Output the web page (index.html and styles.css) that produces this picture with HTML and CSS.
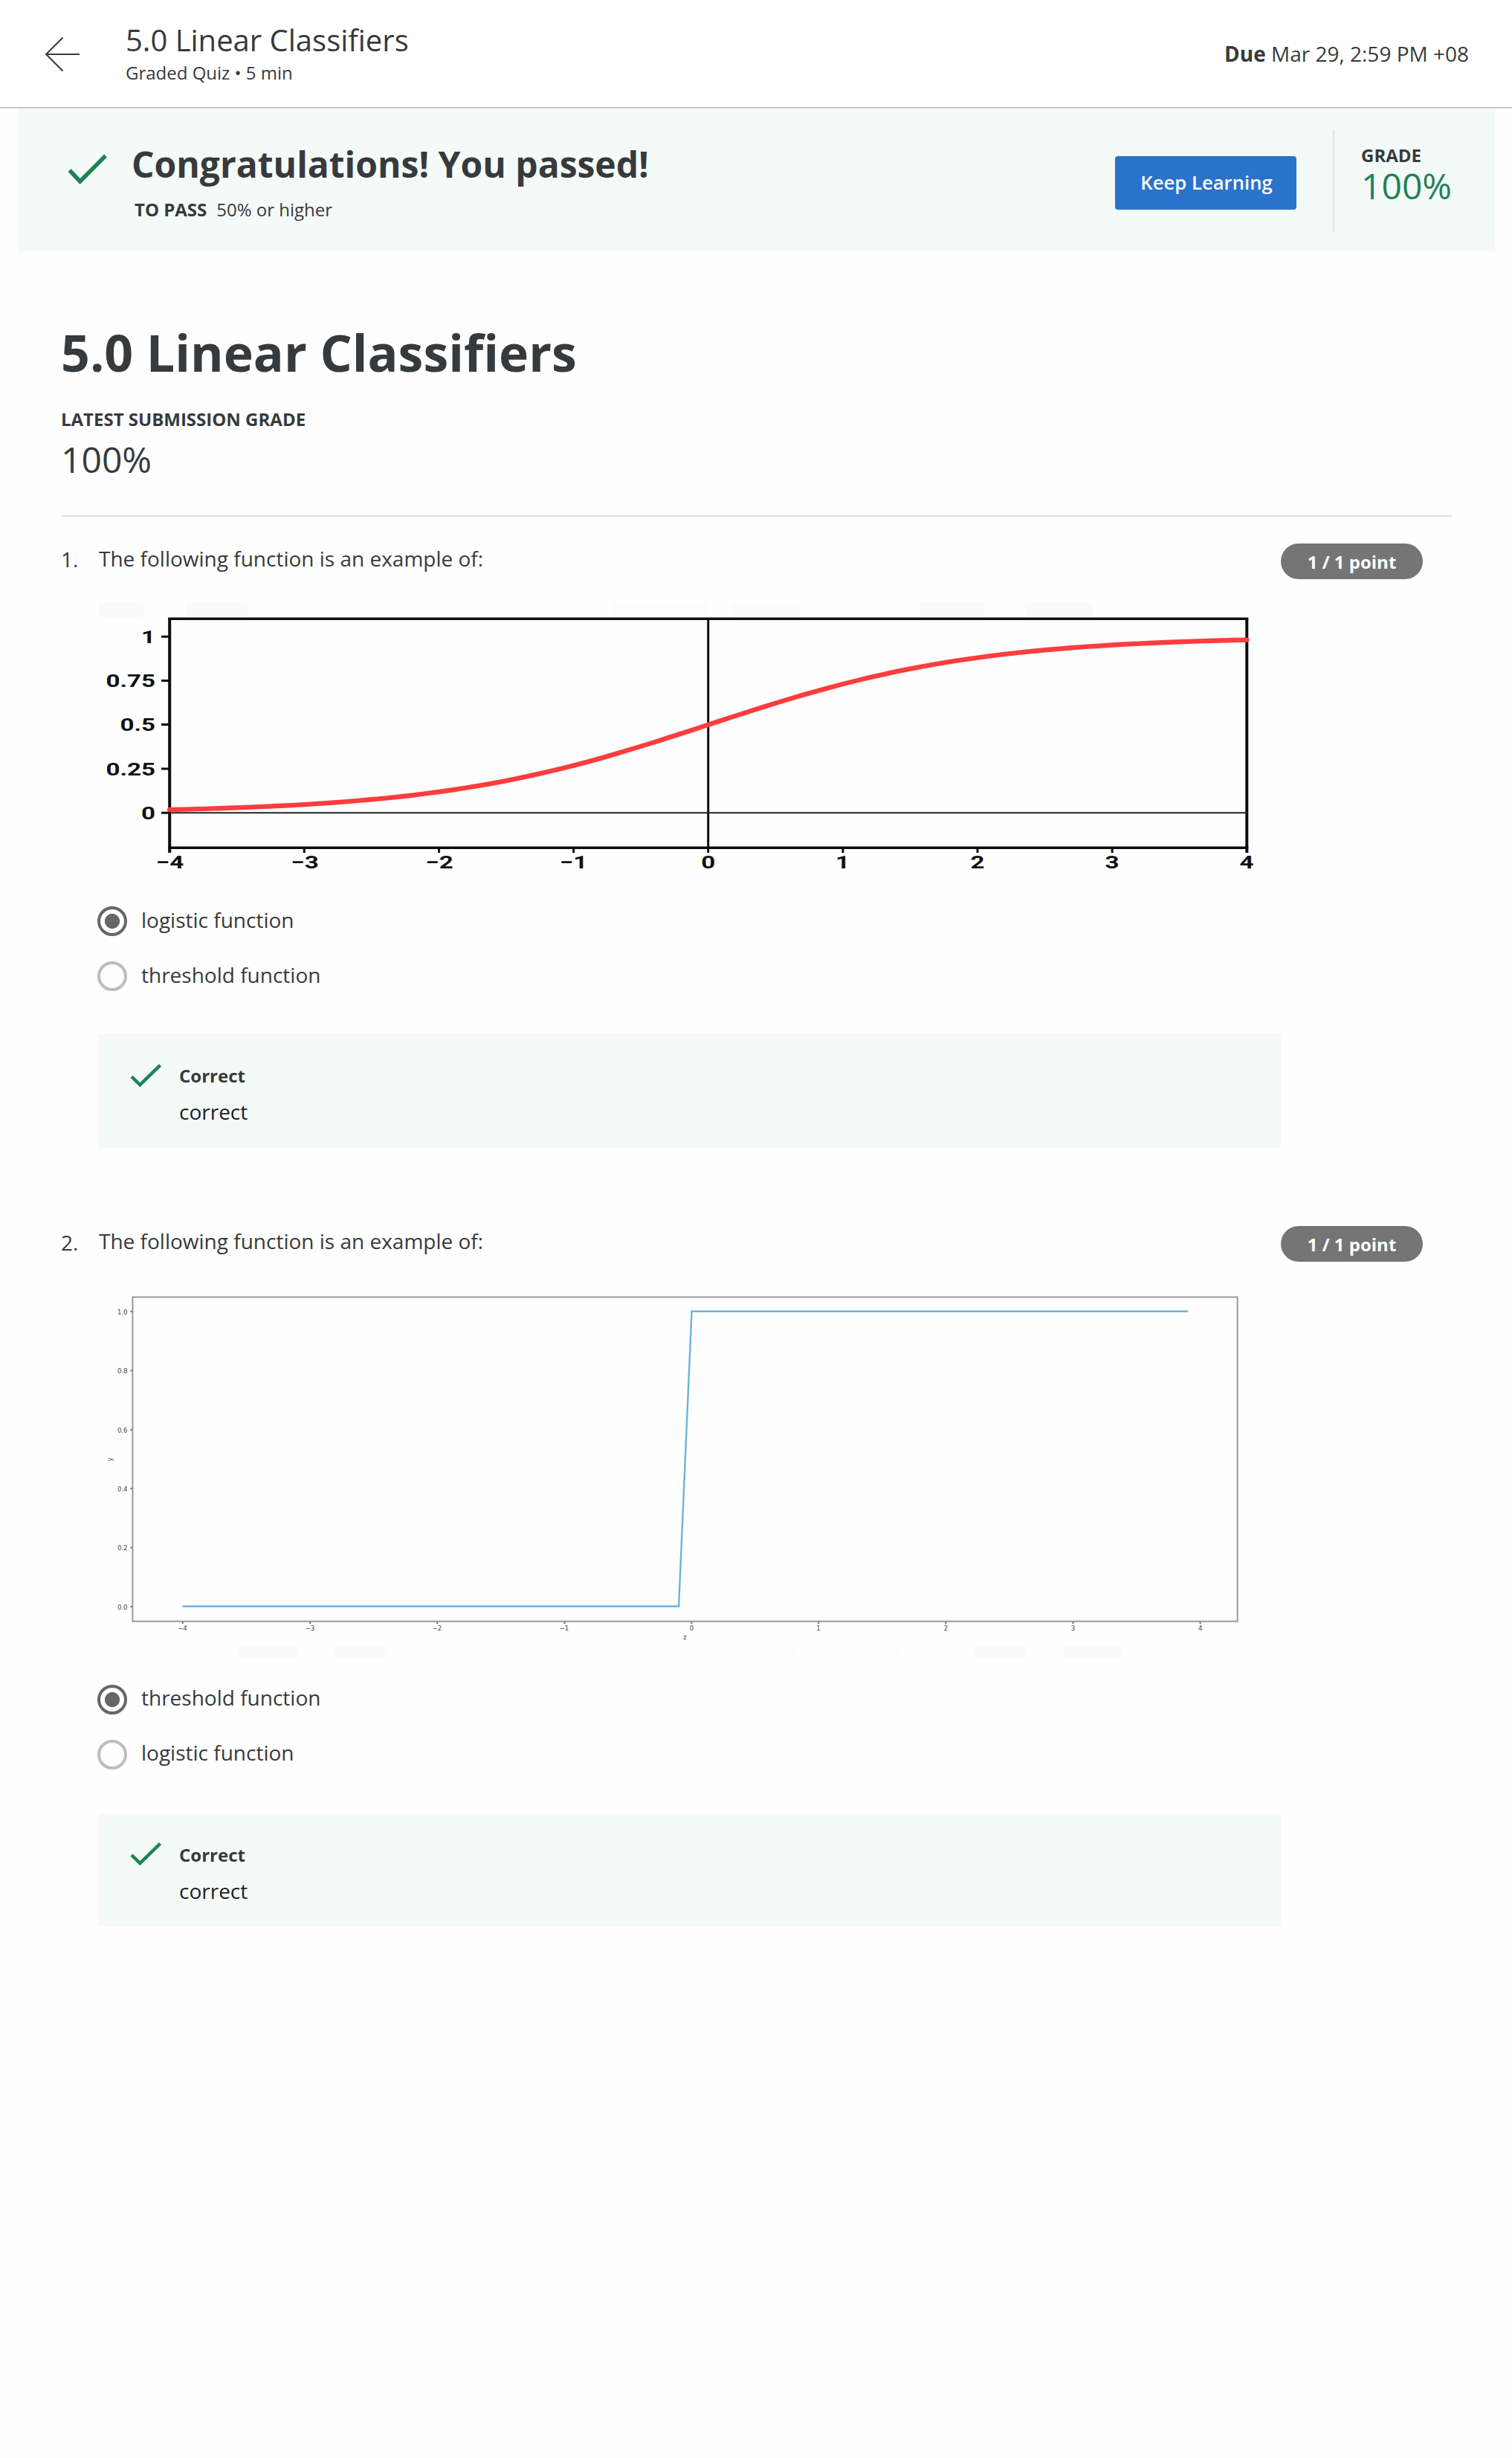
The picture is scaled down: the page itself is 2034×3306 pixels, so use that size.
FILE: index.html
```html
<!DOCTYPE html>
<html lang="en">
<head>
<meta charset="utf-8">
<title>5.0 Linear Classifiers</title>
<link rel="stylesheet" href="styles.css">
</head>
<body>
<header class="topbar">
  <svg class="back" viewBox="0 0 48 48"><path d="M47 24H2M24.500 1.500L2 24l22.500 22.500" fill="none" stroke="#373a3c" stroke-width="2"/></svg>
  <div class="topbar-text">
    <div class="topbar-title">5.0 Linear Classifiers</div>
    <div class="topbar-sub">Graded Quiz • 5 min</div>
  </div>
  <div class="due"><b>Due</b> Mar 29, 2:59 PM +08</div>
</header>

<section class="banner">
  <svg class="banner-check" viewBox="91 206 54 43"><path d="M93.500 229L107.700 244L142 209.500" fill="none" stroke="#1f8354" stroke-width="5.500"/></svg>
  <div class="banner-text">
    <div class="banner-title">Congratulations! You passed!</div>
    <div class="banner-sub"><b>TO PASS</b><span>50% or higher</span></div>
  </div>
  <button class="keep">Keep Learning</button>
  <div class="grade">
    <b>GRADE</b>
    <span class="grade-value">100%</span>
  </div>
</section>

<main class="content">
  <h1>5.0 Linear Classifiers</h1>
  <div class="latest"><b>LATEST SUBMISSION GRADE</b></div>
  <div class="latest-value">100%</div>

  <section class="question">
    <div class="num">1.</div>
    <div class="body">
      <div class="prompt">The following function is an example of:</div>
      <svg class="chart chart-logistic" viewBox="133 811 1590 365">
        <g fill="#f9fafc">
          <path d="M133 811h60v19h-60zM249.500 811h83.500v19h-83.500zM1238 811h86v19h-86zM1379 811h91v19h-91z"/>
          <path d="M824 811h128v19h-130z" fill="#fbfcfd"/>
          <path d="M981.500 811h97.500l-6 19h-84z" fill="#fdfafb"/>
          <path d="M505 811h11l-11 19h-12zM626 811h10l11 19h-11zM745 811h8l-8 19h-9z" fill="#fcfdfd"/>
        </g>
        <g stroke="#0c0c0c" fill="none">
          <path d="M228.200 832.300V1147M1677.300 832.300V1147" stroke-width="4"/>
          <path d="M226.200 832.300H1679.300M226.200 1140.300H1679.300" stroke-width="3.400"/>
          <path d="M952.700 832V1147" stroke-width="3"/>
          <path d="M228 1093.300H1677" stroke="#222" stroke-width="2"/>
          <path d="M217 856.300H228M217 915.600H228M217 974.500H228M217 1034H228M217 1093.300H228" stroke-width="3"/>
          <path d="M409.300 1140V1147M590.500 1140V1147M771.600 1140V1147M1133.900 1140V1147M1315 1140V1147M1496.200 1140V1147" stroke-width="3"/>
        </g>
        <path id="sigmoid" fill="none" stroke="#fc3d3d" stroke-width="6.400" stroke-linecap="round" d=""/>
        <g class="axis-bold" text-anchor="end">
          <text transform="translate(209 865) scale(1.380 1)">1</text>
          <text transform="translate(209 924) scale(1.380 1)">0.75</text>
          <text transform="translate(209 983) scale(1.380 1)">0.5</text>
          <text transform="translate(209 1042.500) scale(1.380 1)">0.25</text>
          <text transform="translate(209 1101.700) scale(1.380 1)">0</text>
        </g>
        <g class="axis-bold" text-anchor="middle">
          <text transform="translate(228.500 1168) scale(1.380 1)">−4</text>
          <text transform="translate(410 1168) scale(1.380 1)">−3</text>
          <text transform="translate(591 1168) scale(1.380 1)">−2</text>
          <text transform="translate(771.500 1168) scale(1.380 1)">−1</text>
          <text transform="translate(952.700 1168) scale(1.380 1)">0</text>
          <text transform="translate(1133.500 1168) scale(1.380 1)">1</text>
          <text transform="translate(1315 1168) scale(1.380 1)">2</text>
          <text transform="translate(1496 1168) scale(1.380 1)">3</text>
          <text transform="translate(1677 1168) scale(1.380 1)">4</text>
        </g>
      </svg>
      <div class="options">
        <label class="option"><i class="radio on"></i><span>logistic function</span></label>
        <label class="option"><i class="radio"></i><span>threshold function</span></label>
      </div>
      <div class="feedback">
        <svg class="check" viewBox="175 1430 43 33"><path d="M177 1448L188.300 1459L215.500 1432.700" fill="none" stroke="#1f8354" stroke-width="4.500"/></svg>
        <div class="feedback-text"><b>Correct</b><p>correct</p></div>
      </div>
    </div>
    <div class="pill">1 / 1 point</div>
  </section>

  <section class="question second">
    <div class="num">2.</div>
    <div class="body">
      <div class="prompt">The following function is an example of:</div>
      <svg class="chart chart-threshold" viewBox="133 1729 1590 500">
        <g fill="#f9fafc">
          <path d="M321 2215h79.500v14h-79.500zM450 2215h72v14h-72zM1310 2215h72v14h-72zM1431 2215h80v14h-80z"/>
          <path d="M704 2215h63l-10 14h-40zM1000 2215h70v14h-70zM1122 2215h88l4 14h-95z" fill="#fcfcfb"/>
        </g>
        <g fill="none" stroke="#999" stroke-width="2">
          <rect x="178.400" y="1744.600" width="1486.300" height="436.100"/>
          <path d="M175.500 1764H178M175.500 1843.500H178M175.500 1923H178M175.500 2002H178M175.500 2081.500H178M175.500 2161H178M245.800 2181V2184M417.200 2181V2184M588.300 2181V2184M759.400 2181V2184M930.500 2181V2184M1101.200 2181V2184M1272.300 2181V2184M1443.500 2181V2184M1614.600 2181V2184" stroke="#777"/>
        </g>
        <path d="M245.800 2160.500H913.100L930.500 1763.700H1598" fill="none" stroke="#6cb3dc" stroke-width="2.400"/>
        <g class="axis-small" text-anchor="end">
          <text x="171.500" y="1767.500">1.0</text>
          <text x="171.500" y="1847">0.8</text>
          <text x="171.500" y="1926.500">0.6</text>
          <text x="171.500" y="2005.700">0.4</text>
          <text x="171.500" y="2085">0.2</text>
          <text x="171.500" y="2164.500">0.0</text>
        </g>
        <g class="axis-small" text-anchor="middle">
          <text x="245.500" y="2192.500">−4</text>
          <text x="417" y="2192.500">−3</text>
          <text x="588" y="2192.500">−2</text>
          <text x="759" y="2192.500">−1</text>
          <text x="930.500" y="2192.500">0</text>
          <text x="1101" y="2192.500">1</text>
          <text x="1272.500" y="2192.500">2</text>
          <text x="1443.500" y="2192.500">3</text>
          <text x="1614.600" y="2192.500">4</text>
          <text x="921.500" y="2204.500">z</text>
          <text transform="translate(151 1963) rotate(-90)">y</text>
        </g>
      </svg>
      <div class="options">
        <label class="option"><i class="radio on"></i><span>threshold function</span></label>
        <label class="option"><i class="radio"></i><span>logistic function</span></label>
      </div>
      <div class="feedback">
        <svg class="check" viewBox="175 1430 43 33"><path d="M177 1448L188.300 1459L215.500 1432.700" fill="none" stroke="#1f8354" stroke-width="4.500"/></svg>
        <div class="feedback-text"><b>Correct</b><p>correct</p></div>
      </div>
    </div>
    <div class="pill">1 / 1 point</div>
  </section>
</main>
<script src="chart.js"></script>
</body>
</html>
```
FILE: styles.css
```css
* { box-sizing: border-box; }
body {
  margin: 0;
  min-height: 3306px;
  background: #fefefe;
  color: #373a3c;
  font-family: "Open Sans", sans-serif;
  font-size: 28px;
  line-height: 40px;
}
b { font-weight: 700; }
p { margin: 0; }
svg { display: block; }

.topbar {
  display: flex;
  height: 145px;
  padding: 25px 58px 0 60px;
  background: #fff;
  border-bottom: 1px solid #b9b9b9;
}
.back { width: 48px; height: 48px; margin-top: 24px; }
.topbar-text { flex: 1; margin-left: 61px; }
.topbar-title { font-size: 40px; line-height: 57px; }
.topbar-sub { font-size: 24px; line-height: 32px; }
.due { margin-top: 27px; }

.banner {
  display: flex;
  height: 192px;
  margin: 0 23px 0 24px;
  padding-right: 58px;
  background: #f4faf8;
}
.topbar { box-shadow: 0 1px 0 #dcdcdc; margin-bottom: 1px; }
.banner-check { width: 54px; height: 43px; margin: 60px 0 0 67px; }
.banner-text { flex: 1; margin: 43px 0 0 32px; }
.banner-title { font-size: 48px; line-height: 64px; font-weight: 700; }
.banner-sub { display: flex; gap: 13px; margin: 13px 0 0 4px; font-size: 24px; line-height: 32px; }
.keep {
  width: 244px;
  height: 72px;
  margin-top: 64px;
  padding: 0 0 0 2px;
  border: 0;
  border-radius: 4px;
  background: #2a73cc;
  color: #fff;
  font: 600 25.700px/72px "Open Sans", sans-serif;
}
.grade {
  display: flex;
  flex-direction: column;
  width: 160px;
  height: 137px;
  margin: 28px 0 0 49px;
  padding: 19px 0 0 36px;
  border-left: 2px solid #e1e3e3;
  font-size: 24px;
  line-height: 32px;
}
.grade-value { font-size: 48px; line-height: 50px; color: #1f8354; }

.content { padding: 91px 81px 0 82px; }
h1 { margin: 0; font-size: 68px; line-height: 90px; font-weight: 700; }
.latest { margin-top: 29px; font-size: 24px; line-height: 32px; }
.latest-value {
  padding: 8px 0 45px;
  border-bottom: 2px solid #e1e1e1;
  font-size: 48px;
  line-height: 60px;
}

.question {
  display: grid;
  grid-template-columns: 51px 1590px 191px;
  align-items: start;
  margin-top: 36px;
}
.num { padding-top: 1px; }
.chart { width: 1590px; margin-top: 40px; }
.chart-logistic { height: 365px; }
.chart-threshold { height: 500px; }
.axis-bold { font: 700 24px "Roboto", sans-serif; fill: #111; }
.axis-small { font: 8.500px "DejaVu Sans", sans-serif; fill: #444; }

.options { display: flex; flex-direction: column; gap: 34px; margin-top: 41px; }
.option { display: flex; gap: 19px; height: 40px; margin-left: -2px; }
.radio {
  width: 40px;
  height: 40px;
  margin-top: 2px;
  border: 4px solid #bdbdbd;
  border-radius: 50%;
}
.radio.on {
  border-color: #666;
  background: radial-gradient(circle, #666 9.700px, transparent 10.300px);
}
.feedback {
  display: flex;
  height: 154px;
  margin-top: 59px;
  padding: 41px 42px 0;
  background: #f4faf8;
}
.check { width: 43px; height: 33px; margin-top: -1px; }
.feedback-text { margin-left: 23px; font-size: 24px; line-height: 32px; }
.feedback-text b { display: block; }
.feedback-text p { margin-top: 12px; font-size: 28px; line-height: 40px; color: #1f1f1f; }
.pill {
  height: 48px;
  border-radius: 24px;
  background: #757575;
  color: #fff;
  font-size: 24px;
  line-height: 50px;
  font-weight: 700;
  text-align: center;
}

.second { margin-top: 105px; }
.second .num { padding-top: 2px; }
.second .options { margin-top: 34px; }
.second .radio { margin-top: 3px; }
.second .feedback { height: 152px; margin-top: 62px; padding-top: 40px; }
.second .check { margin-top: -2px; }
```
FILE: chart.js
```js
// Logistic curve sampled over [-4, 4] in the chart's own units
let d = "";
for (let x = -4; x <= 4.001; x += 0.1) {
  const y = 1 / (1 + Math.exp(-x));
  d += (d ? "L" : "M") + (952.7 + x * 181.15).toFixed(1) + " " + (1093.3 - y * 237).toFixed(1);
}
document.getElementById("sigmoid").setAttribute("d", d);
```
